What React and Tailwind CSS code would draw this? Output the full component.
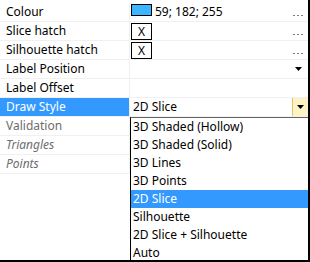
import React from "react";

function Dots() {
  return (
    <div className="ml-auto mr-[5px] flex items-end gap-[2px] self-stretch pb-[5px]">
      <div className="w-[2px] h-[1px] bg-[#7a7a7a]" />
      <div className="w-[2px] h-[1px] bg-[#7a7a7a]" />
      <div className="w-[2px] h-[1px] bg-[#7a7a7a]" />
    </div>
  );
}

function Arrow() {
  return (
    <svg width="7" height="4" viewBox="0 0 7 4" className="block">
      <polygon points="0,0 7,0 3.5,4" fill="#000" />
    </svg>
  );
}

function Row({ label, labelClass = "", children, valueClass = "" }) {
  return (
    <div className="flex h-[19px] border-b border-[#f0f0f0]">
      <div
        className={
          "w-[130px] shrink-0 border-r border-[#f0f0f0] pl-[6px] flex items-center whitespace-nowrap " +
          labelClass
        }
      >
        {label}
      </div>
      <div className={"flex-1 flex items-center min-w-0 " + valueClass}>{children}</div>
    </div>
  );
}

const items = [
  "3D Shaded (Hollow)",
  "3D Shaded (Solid)",
  "3D Lines",
  "3D Points",
  "2D Slice",
  "Silhouette",
  "2D Slice + Silhouette",
  "Auto",
];

export default function App() {
  return (
    <div className="relative w-[310px] h-[262px] bg-white border-r-2 border-b-2 border-black overflow-hidden pt-[3px] font-['Noto_Sans',sans-serif] text-[12px] text-black leading-none">
      <Row label="Colour">
        <div className="ml-[1px] w-[21px] h-[12px] border border-black bg-[#3bb6ff] self-start mt-[1px]" />
        <span className="ml-[3px]">59; 182; 255</span>
        <Dots />
      </Row>
      <Row label="Slice hatch">
        <div className="ml-[1px] w-[21px] h-[17px] border border-black flex items-center justify-center self-end">
          X
        </div>
        <Dots />
      </Row>
      <Row label="Silhouette hatch">
        <div className="ml-[1px] w-[21px] h-[17px] border border-black flex items-center justify-center self-end">
          X
        </div>
        <Dots />
      </Row>
      <Row label="Label Position">
        <div className="ml-auto mr-[6px]">
          <Arrow />
        </div>
      </Row>
      <Row label="Label Offset" />
      <Row label="Draw Style" labelClass="bg-[#3399ff] text-white">
        <span className="ml-[3px]">2D Slice</span>
        <div className="ml-auto self-stretch w-[16px] bg-[#fdf3c4] border-l border-[#e4c56a] flex items-center justify-center">
          <Arrow />
        </div>
      </Row>
      <Row label="Validation" labelClass="text-[#6d6d6d]" />
      <Row label="Triangles" labelClass="text-[#6d6d6d] italic" />
      <Row label="Points" labelClass="text-[#6d6d6d] italic" />

      <div className="absolute left-[130px] top-[117px] w-[178px] h-[143px] bg-white border-l border-t border-l-black border-t-[#646464] overflow-hidden">
        {items.map((it) => (
          <div
            key={it}
            className={
              "h-[18px] pl-[2px] flex items-center whitespace-nowrap " +
              (it === "2D Slice" ? "bg-[#3399ff] text-white" : "")
            }
          >
            {it}
          </div>
        ))}
      </div>
    </div>
  );
}
